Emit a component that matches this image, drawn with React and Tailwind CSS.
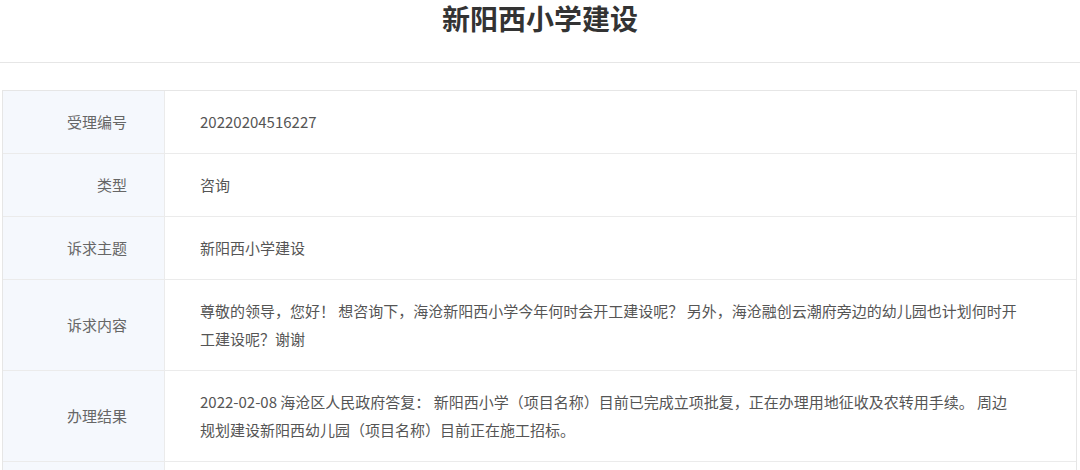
const ROWS = [
  { label: '受理编号', lines: ['20220204516227'] },
  { label: '类型', lines: ['咨询'] },
  { label: '诉求主题', lines: ['新阳西小学建设'] },
  {
    label: '诉求内容',
    lines: [
      '尊敬的领导，您好！ 想咨询下，海沧新阳西小学今年何时会开工建设呢？ 另外，海沧融创云潮府旁边的幼儿园也计划何时开',
      '工建设呢？谢谢',
    ],
  },
  {
    label: '办理结果',
    lines: [
      '2022-02-08 海沧区人民政府答复： 新阳西小学（项目名称）目前已完成立项批复，正在办理用地征收及农转用手续。 周边',
      '规划建设新阳西幼儿园（项目名称）目前正在施工招标。',
    ],
  },
  { label: '', lines: [''] },
];

export default function App() {
  return (
    <div
      className="w-[1080px] h-[470px] overflow-hidden bg-white"
      style={{ fontFamily: '"Noto Sans CJK SC", "Noto Sans", sans-serif' }}
    >
      <h1 className="h-[36px] leading-[36px] text-center text-[28px] font-bold text-[#333]">
        新阳西小学建设
      </h1>
      <div className="mt-[26px] h-px bg-[#e6e6e6]" />

      <div className="mt-[27px] ml-[2px] w-[1075px] border border-[#e6e6e6]">
        {ROWS.map((row, i) => (
          <div key={i} className="grid grid-cols-[162px_1fr] border-b border-[#ebebeb]">
            <div className="flex items-center justify-end bg-[#f5f8fd] border-r border-[#ebebeb] pr-[37px] text-[15px] leading-[28px] text-[#666] min-h-[62px]">
              {row.label}
            </div>
            <div className="py-[17px] pl-[35px] pr-[20px] text-[15px] leading-[28px] text-[#555]">
              {row.lines.map((line, j) => (
                <div key={j} className="whitespace-nowrap min-h-[28px]">
                  {line}
                </div>
              ))}
            </div>
          </div>
        ))}
      </div>
    </div>
  );
}
